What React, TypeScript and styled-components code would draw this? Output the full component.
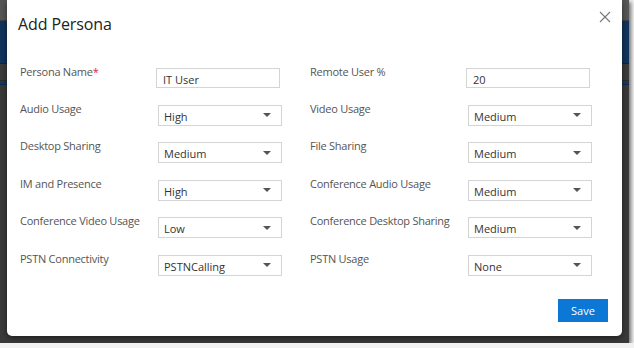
import React from "react";
import styled, { createGlobalStyle } from "styled-components";

const GlobalStyle = createGlobalStyle`
  html, body {
    margin: 0;
    padding: 0;
    background: #f2f2f2;
    font-family: "Open Sans", "Noto Sans", sans-serif;
  }
`;

const StyledFrame = styled.div`
  position: relative;
  width: 629px;
  height: 343px;
  overflow: hidden;
  background: #3a3a3a;
  box-shadow: 2px 2px 4px rgba(0, 0, 0, 0.55);
  display: flex;
  flex-direction: column;
`;

const StyledBand = styled.div<{ $height: number; $color: string }>`
  height: ${(p) => p.$height}px;
  background: ${(p) => p.$color};
  border-bottom: 1px solid rgba(0, 0, 0, 0.25);
  flex-shrink: 0;
`;

const StyledDialog = styled.div`
  position: absolute;
  left: 7px;
  top: 0;
  width: 615px;
  height: 336px;
  box-sizing: border-box;
  background: #ffffff;
  border-radius: 0 0 5px 5px;
  box-shadow: 0 2px 6px rgba(0, 0, 0, 0.5);
  padding: 12px 14px 14px 11px;
  display: flex;
  flex-direction: column;
`;

const StyledHeader = styled.div`
  display: flex;
  align-items: flex-start;
  justify-content: space-between;
`;

const StyledTitle = styled.h2`
  margin: 0;
  font-size: 16px;
  font-weight: 400;
  line-height: 24px;
  letter-spacing: -0.1px;
  color: #222;
`;

const StyledClose = styled.button`
  border: none;
  background: none;
  padding: 0;
  margin: -1px -3px 0 0;
  width: 12px;
  height: 12px;
  cursor: pointer;
  display: flex;

  svg {
    width: 12px;
    height: 12px;
  }
`;

const StyledForm = styled.div`
  margin-top: 28px;
  padding-left: 2px;
  display: grid;
  grid-template-columns: 138px 124px 28px 158px 124px;
  row-gap: 12.6px;
  align-items: start;
`;

const StyledLabel = styled.span`
  font-size: 11px;
  line-height: 15px;
  letter-spacing: -0.25px;
  color: #555;
  white-space: nowrap;
`;

const StyledRequired = styled.span`
  color: #d9243c;
`;

const StyledTextInput = styled.input`
  box-sizing: border-box;
  margin: 4px 0 0 -2px;
  width: 124px;
  height: 20px;
  border: 1px solid #d4d4d4;
  padding: 2px 6px 0;
  font-family: inherit;
  font-size: 11px;
  color: #333;
  outline: none;
`;

const StyledSelect = styled.div`
  box-sizing: border-box;
  margin-top: 4px;
  width: 124px;
  height: 21px;
  border: 1px solid #d4d4d4;
  padding: 2px 10px 0 5px;
  display: flex;
  align-items: center;
  justify-content: space-between;
  font-size: 11px;
  color: #333;
  background: #fff;
`;

const StyledCaret = styled.span`
  width: 0;
  height: 0;
  border-left: 4px solid transparent;
  border-right: 4px solid transparent;
  border-top: 4px solid #555;
  margin-top: -2px;
`;

const StyledFooter = styled.div`
  margin-top: auto;
  display: flex;
  justify-content: flex-end;
`;

const StyledSaveButton = styled.button`
  width: 50px;
  height: 23px;
  border: none;
  background: #0a78d4;
  color: #fff;
  font-family: inherit;
  font-size: 11px;
  cursor: pointer;
`;

type Field =
  | { label: string; kind: "text"; value: string; required?: boolean }
  | { label: string; kind: "select"; value: string };

const rows: [Field, Field][] = [
  [
    { label: "Persona Name", kind: "text", value: "IT User", required: true },
    { label: "Remote User %", kind: "text", value: "20" },
  ],
  [
    { label: "Audio Usage", kind: "select", value: "High" },
    { label: "Video Usage", kind: "select", value: "Medium" },
  ],
  [
    { label: "Desktop Sharing", kind: "select", value: "Medium" },
    { label: "File Sharing", kind: "select", value: "Medium" },
  ],
  [
    { label: "IM and Presence", kind: "select", value: "High" },
    { label: "Conference Audio Usage", kind: "select", value: "Medium" },
  ],
  [
    { label: "Conference Video Usage", kind: "select", value: "Low" },
    { label: "Conference Desktop Sharing", kind: "select", value: "Medium" },
  ],
  [
    { label: "PSTN Connectivity", kind: "select", value: "PSTNCalling" },
    { label: "PSTN Usage", kind: "select", value: "None" },
  ],
];

function FieldCells({ field }: { field: Field }) {
  return (
    <>
      <StyledLabel>
        {field.label}
        {field.kind === "text" && field.required && <StyledRequired>*</StyledRequired>}
      </StyledLabel>
      {field.kind === "text" ? (
        <StyledTextInput defaultValue={field.value} />
      ) : (
        <StyledSelect>
          <span>{field.value}</span>
          <StyledCaret />
        </StyledSelect>
      )}
    </>
  );
}

export default function App() {
  return (
    <>
      <GlobalStyle />
      <StyledFrame>
        <StyledBand $height={20} $color="#565656" />
        <StyledBand $height={42} $color="#10355c" />
        <StyledBand $height={16} $color="#3c3c3c" />
        <StyledBand $height={3} $color="#173a60" />
        <StyledDialog>
          <StyledHeader>
            <StyledTitle>Add Persona</StyledTitle>
            <StyledClose aria-label="Close">
              <svg viewBox="0 0 12 12" fill="none" stroke="#777" strokeWidth="1.1">
                <line x1="1" y1="1" x2="11" y2="11" />
                <line x1="11" y1="1" x2="1" y2="11" />
              </svg>
            </StyledClose>
          </StyledHeader>
          <StyledForm>
            {rows.map(([left, right]) => (
              <React.Fragment key={left.label}>
                <FieldCells field={left} />
                <span />
                <FieldCells field={right} />
              </React.Fragment>
            ))}
          </StyledForm>
          <StyledFooter>
            <StyledSaveButton>Save</StyledSaveButton>
          </StyledFooter>
        </StyledDialog>
      </StyledFrame>
    </>
  );
}
